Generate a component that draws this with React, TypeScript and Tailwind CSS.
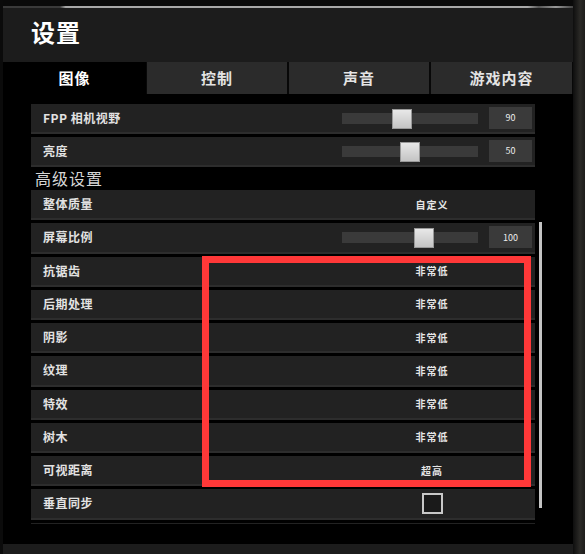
import React from "react";

type Row =
  | { kind: "slider"; label: string; value: number; thumb: number }
  | { kind: "text"; label: string; value: string }
  | { kind: "check"; label: string };

const basicRows: Row[] = [
  { kind: "slider", label: "FPP 相机视野", value: 90, thumb: 50 },
  { kind: "slider", label: "亮度", value: 50, thumb: 58 },
];

const advancedRows: Row[] = [
  { kind: "text", label: "整体质量", value: "自定义" },
  { kind: "slider", label: "屏幕比例", value: 100, thumb: 72 },
  { kind: "text", label: "抗锯齿", value: "非常低" },
  { kind: "text", label: "后期处理", value: "非常低" },
  { kind: "text", label: "阴影", value: "非常低" },
  { kind: "text", label: "纹理", value: "非常低" },
  { kind: "text", label: "特效", value: "非常低" },
  { kind: "text", label: "树木", value: "非常低" },
  { kind: "text", label: "可视距离", value: "超高" },
  { kind: "check", label: "垂直同步" },
  // next row is scrolled out of view, only its top edge shows
  { kind: "check", label: "" },
];

const tabs = ["图像", "控制", "声音", "游戏内容"];

function SettingRow({ row, tall }: { row: Row; tall?: boolean }) {
  return (
    <div
      className={`flex items-center shrink-0 bg-[#222222] border-b-2 border-[#2d2d2d] ${
        tall ? "h-[30.25px]" : "h-[30px]"
      }`}
    >
      <div className="flex-1 pl-[12px] text-[12px] font-bold text-[#e2e2e2] leading-none tracking-[0.5px]">
        {row.label}
      </div>
      <div className="w-[193px] flex items-center">
        {row.kind === "slider" && (
          <>
            <div className="relative w-[136px] h-[11px] bg-[#3a3a3a]">
              {/* slider thumb */}
              <div
                className="absolute top-[-4px] w-[20px] h-[20px] bg-[linear-gradient(#e8e8e8,#c4c4c4)] border border-[#999]"
                style={{ left: row.thumb }}
              />
            </div>
            <div className="ml-[11px] w-[43px] h-[22px] bg-[#3a3a3a] flex items-center justify-center text-[9px] text-[#eee]">
              {row.value}
            </div>
          </>
        )}
        {row.kind === "text" && (
          <div className="w-[180px] text-center text-[10px] font-bold text-[#e6e6e6] tracking-[1px]">
            {row.value}
          </div>
        )}
        {row.kind === "check" && (
          <div className="w-[180px] flex justify-center">
            <div className="w-[21px] h-[21px] border-2 border-[#c8c8c8] bg-[#1a1a1a]" />
          </div>
        )}
      </div>
    </div>
  );
}

export default function App() {
  return (
    <div className="relative w-[585px] h-[554px] overflow-hidden flex bg-[#080808] font-['Noto_Sans_CJK_SC','Noto_Sans',sans-serif]">
      <div className="w-[3px] bg-[#0b0b0b]" />

      <div className="w-[570px] flex flex-col">
        {/* top edge */}
        <div className="h-[6px] bg-[#0a0a0a]" />
        <div className="h-[2px] bg-[linear-gradient(to_right,#3a3a3a_0%,#3a3a3a_10%,#a8a8a8_11%,#a8a8a8_92%,#555_94%,#999_97%,#444_100%)]" />

        {/* title */}
        <div className="h-[54px] bg-[#1c1c1c] flex items-center pl-[28px] pb-[6px]">
          <h1 className="text-[24px] font-bold text-white tracking-[1px]">设置</h1>
        </div>

        {/* tabs */}
        <div className="h-[32px] flex">
          {tabs.map((t, i) => (
            <div
              key={t}
              className={`flex items-center justify-center text-[15px] font-bold tracking-[1px] ${
                i === 0
                  ? "w-[143px] bg-black text-white"
                  : i === 1
                  ? "w-[140px] ml-[1px] bg-[#2b2b2b] text-[#e4e4e4]"
                  : i === 2
                  ? "w-[140px] ml-[2px] bg-[#2b2b2b] text-[#e4e4e4]"
                  : "w-[141px] ml-[2px] bg-[#2b2b2b] text-[#e4e4e4]"
              }`}
            >
              {t}
            </div>
          ))}
        </div>

        {/* content */}
        <div className="h-[430px] bg-black flex overflow-hidden">
          <div className="w-[504px] ml-[28px] pt-[10px] flex flex-col gap-[3px]">
            {basicRows.map((r) => (
              <SettingRow key={r.label} row={r} />
            ))}
            <div className="h-[17px] shrink-0 pl-[4px] text-[16px] leading-[17px] text-[#d6d6d6] tracking-[1px]">
              高级设置
            </div>
            {advancedRows.map((r, i) => (
              <SettingRow key={i} row={r} tall />
            ))}
          </div>
          {/* scrollbar */}
          <div className="ml-[4px] mt-[128px] w-[3px] h-[286px] bg-[#c4c4c4]" />
        </div>
        <div className="h-[20px] bg-black" />
        <div className="h-[10px] bg-[#1c1c1c]" />
      </div>

      <div className="w-[12px] bg-[linear-gradient(to_right,#0e0e0e,#2b2a27_60%,#1e1d1b)]" />

      {/* red highlight annotation */}
      <div className="absolute left-[202px] top-[256px] w-[329px] h-[231px] border-[7px] border-[#ff3838]" />
    </div>
  );
}
